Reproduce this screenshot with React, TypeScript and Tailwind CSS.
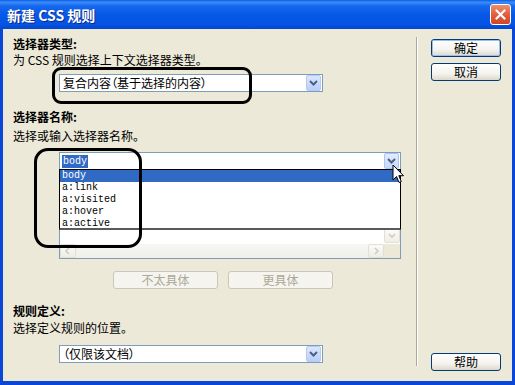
import React from "react";

const Chevron = ({ color = "#4d6185" }: { color?: string }) => (
  <svg width="9" height="6" viewBox="0 0 9 6">
    <path d="M1 1 L4.5 4.5 L8 1" fill="none" stroke={color} strokeWidth="2" />
  </svg>
);

const DropBtn = () => (
  <div className="w-[15px] h-[16px] flex items-center justify-center rounded-[2px] border border-[#b5cbf5] bg-[linear-gradient(to_bottom,#dbe6fd,#b9cff9)]">
    <Chevron />
  </div>
);

const Select = ({ text, w }: { text: string; w: string }) => (
  <div className={`${w} h-[18px] border border-[#7f9db9] bg-white flex items-center justify-between pl-[3px] pr-[1px]`}>
    <span className="text-[12px] leading-[16px] text-black [font-feature-settings:'palt']">{text}</span>
    <DropBtn />
  </div>
);

const XPButton = ({ label, def }: { label: string; def?: boolean }) => (
  <div className="w-[70px] h-[18px] rounded-[3px] border border-[#003c74] bg-[linear-gradient(to_bottom,#ffffff,#f4f3ee_60%,#dcd8cc)] flex items-center justify-center">
    <div
      className={`w-full h-full rounded-[2px] flex items-center justify-center text-[12px] leading-[14px] text-black ${
        def ? "border border-[#9cbcf0]" : ""
      }`}
    >
      {label}
    </div>
  </div>
);

const DisabledButton = ({ label }: { label: string }) => (
  <div className="w-[105px] h-[18px] rounded-[3px] border border-[#cbc7b8] bg-[#f5f4ee] flex items-center justify-center text-[12px] leading-[14px] text-[#aca899]">
    {label}
  </div>
);

const FadedArrow = ({ dir }: { dir: "down" | "left" | "right" }) => {
  const d =
    dir === "down" ? "M2 3 L5 6 L8 3" : dir === "left" ? "M6 2 L3 5 L6 8" : "M4 2 L7 5 L4 8";
  return (
    <div className="w-[16px] h-[14px] rounded-[2px] border border-[#e2e0d6] bg-[linear-gradient(to_bottom,#fbfbf8,#eeede6)] flex items-center justify-center">
      <svg width="10" height="10" viewBox="0 0 10 10">
        <path d={d} fill="none" stroke="#cfcdc2" strokeWidth="1.6" />
      </svg>
    </div>
  );
};

export default function App() {
  const items = ["body", "a:link", "a:visited", "a:hover", "a:active"];
  return (
    <div className="relative w-[515px] h-[385px] overflow-hidden bg-[#0a47d9] flex flex-col font-['Noto_Sans_CJK_SC','Noto_Sans',sans-serif]">
      {/* Title bar */}
      <div className="h-[29px] flex items-center justify-between pl-[7px] pr-[4px] bg-[linear-gradient(to_bottom,#0a5ee9_0%,#3d8cf7_8%,#1769ef_20%,#0758e7_50%,#0553e2_85%,#0446d2_100%)]">
        <span className="text-white font-bold text-[14px] leading-[16px] [text-shadow:1px_1px_0_#0b2a8a]">
          新建 CSS 规则
        </span>
        <div className="w-[21px] h-[21px] rounded-[3px] border border-white bg-[linear-gradient(to_bottom,#ec9070,#e0603e_50%,#cf4525)] flex items-center justify-center">
          <svg width="11" height="11" viewBox="0 0 11 11">
            <path d="M1.5 1.5 L9.5 9.5 M9.5 1.5 L1.5 9.5" stroke="white" strokeWidth="2.2" strokeLinecap="round" />
          </svg>
        </div>
      </div>

      {/* Body */}
      <div className="flex-1 flex ml-[3px] mr-[3px] mb-[4px] bg-[#ece9d8]">
        {/* Left column */}
        <div className="w-[413px] flex flex-col pl-[10px] pt-[7px] text-black">
          <div className="text-[12px] leading-[16px] font-bold">选择器类型:</div>
          <div className="text-[12px] leading-[16px]">为 CSS 规则选择上下文选择器类型。</div>
          <div className="mt-[6px] ml-[46px]">
            <Select text="复合内容（基于选择的内容）" w="w-[264px]" />
          </div>

          <div className="mt-[17px] text-[12px] leading-[16px] font-bold">选择器名称:</div>
          <div className="mt-[3px] text-[12px] leading-[16px]">选择或输入选择器名称。</div>

          <div className="relative mt-[8px] ml-[46px] w-[342px]">
            {/* combo input */}
            <div className="h-[18px] border border-[#7f9db9] bg-white flex items-center justify-between pl-[2px] pr-[1px]">
              <span className="bg-[#316ac5] text-white font-['Liberation_Mono',monospace] text-[10px] leading-[13px] px-[1px]">
                body
              </span>
              <div className="w-[15px] h-[16px] flex items-center justify-center rounded-[2px] border border-[#aac4f4] bg-[linear-gradient(to_bottom,#e3ecfe,#c3d6fb)]">
                <Chevron />
              </div>
            </div>
            {/* textarea under */}
            <div className="mt-[1px] h-[88px] border border-[#7f9db9] bg-white flex flex-col">
              <div className="flex-1 flex">
                <div className="flex-1" />
                <div className="w-[16px] flex flex-col justify-end pb-[1px]">
                  <FadedArrow dir="down" />
                </div>
              </div>
              <div className="h-[14px] flex">
                <div className="flex-1 flex justify-between bg-[linear-gradient(to_bottom,#f7f7f3,#f0efe9)]">
                  <FadedArrow dir="left" />
                  <FadedArrow dir="right" />
                </div>
                <div className="w-[16px] bg-[#ece9d8]" />
              </div>
            </div>
            {/* dropdown popup */}
            <div className="absolute left-0 top-[17px] w-[342px] h-[61px] border border-black border-b-2 border-b-[#5a5a5a] bg-white flex flex-col">
              {items.map((it, i) => (
                <div
                  key={it}
                  className={`h-[12px] pl-[2px] font-['Liberation_Mono',monospace] text-[10px] leading-[12px] ${
                    i === 0 ? "bg-[#316ac5] text-white" : "text-black"
                  }`}
                >
                  {it}
                </div>
              ))}
            </div>
          </div>

          <div className="mt-[12px] ml-[100px] flex gap-[10px]">
            <DisabledButton label="不太具体" />
            <DisabledButton label="更具体" />
          </div>

          <div className="mt-[14px] text-[12px] leading-[16px] font-bold">规则定义:</div>
          <div className="mt-[1px] text-[12px] leading-[16px]">选择定义规则的位置。</div>
          <div className="mt-[9px] ml-[46px]">
            <Select text="（仅限该文档）" w="w-[264px]" />
          </div>
        </div>

        {/* Separator */}
        <div className="mt-[8px] mb-[15px] w-[2px] border-l border-l-[#aca899] border-r border-r-white" />

        {/* Right column */}
        <div className="flex-1 flex flex-col pl-[13px] pt-[10px] pb-[10px]">
          <XPButton label="确定" def />
          <div className="mt-[6px]">
            <XPButton label="取消" />
          </div>
          <div className="mt-auto">
            <XPButton label="帮助" />
          </div>
        </div>
      </div>

      {/* Annotation outlines */}
      <div className="absolute left-[52px] top-[67px] w-[200px] h-[37px] border-[3px] border-black rounded-[9px]" />
      <div className="absolute left-[34px] top-[148px] w-[108px] h-[100px] border-[3px] border-black rounded-[14px]" />

      {/* Mouse cursor */}
      <svg className="absolute left-[392px] top-[164px]" width="13" height="21" viewBox="0 0 13 21">
        <path
          d="M1 1 L1 16 L4.5 12.5 L7 18.5 L9.3 17.5 L6.8 11.7 L11.5 11.7 Z"
          fill="white"
          stroke="black"
          strokeWidth="1"
          strokeLinejoin="round"
        />
      </svg>
    </div>
  );
}
